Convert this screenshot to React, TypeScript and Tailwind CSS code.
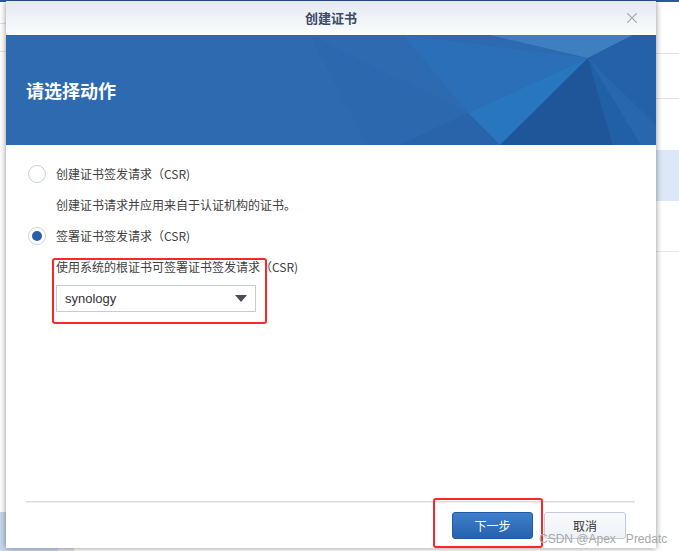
import { IoCloseOutline } from "react-icons/io5";

const cjk = { fontFamily: '"Microsoft YaHei", "Noto Sans CJK SC", "Liberation Sans", sans-serif' };

const Banner = () => {
  return (
    <div className="relative h-[110px] w-full overflow-hidden bg-[#2d6ab0]">
      {/* facets drawn on the right */}
      <svg className="absolute inset-0" width="650" height="110" viewBox="0 0 650 110">
        <polygon points="304,0 462,78 394,110 361,110" fill="#2b68ae" />
        <polygon points="397,0 582,23 462,78" fill="#2a6fb7" />
        <polygon points="484,0 582,23 627,0" fill="#3d7fbf" />
        <polygon points="582,23 627,0 650,0 650,90" fill="#2461a9" />
        <polygon points="462,78 582,23 494,110" fill="#2876be" />
        <polygon points="394,110 462,78 494,110" fill="#2963a9" />
        <polygon points="582,23 494,110 607,110" fill="#1f5599" />
        <polygon points="582,23 650,90 650,110 607,110" fill="#2160a6" />
        <polygon points="582,23 635,110 650,110 650,90" fill="#2867ae" />
      </svg>
      <h1 className="relative pl-5 pt-[42px] text-[18px] font-bold text-white" style={cjk}>
        请选择动作
      </h1>
    </div>
  );
};

const Radio = ({ checked }: { checked?: boolean }) => {
  return (
    <span className="flex h-[18px] w-[18px] shrink-0 items-center justify-center rounded-full border border-[#c9d0d9] bg-white">
      {checked && <span className="h-[10px] w-[10px] rounded-full bg-[#2a5ea8]" />}
    </span>
  );
};

export default function App() {
  return (
    <div className="relative h-[551px] w-[679px] overflow-hidden bg-white" style={cjk}>
      {/* page behind the dialog */}
      <div className="h-[2px] w-full bg-[#2a5a98]" />
      <div className="absolute right-0 top-[53px] h-px w-[30px] bg-[#dfe3e8]" />
      <div className="absolute right-0 top-[98px] h-px w-[30px] bg-[#dfe3e8]" />
      <div className="absolute right-0 top-[150px] h-[51px] w-[30px] bg-[#dce8f7]" />
      <div className="absolute right-0 top-[251px] h-px w-[30px] bg-[#e4e7eb]" />
      <div className="absolute left-0 top-[23px] h-px w-[8px] bg-[#dfe3e8]" />
      <div className="absolute left-0 top-[51px] h-px w-[8px] bg-[#dfe3e8]" />
      <div className="absolute bottom-0 left-0 h-[39px] w-[58px] bg-[#c7d7ec]" />
      <div className="absolute bottom-0 left-[58px] h-[39px] w-[16px] bg-[#e3e6ea]" />

      {/* dialog window */}
      <div className="absolute left-[6px] top-[1px] flex h-[547px] w-[650px] flex-col bg-white shadow-[0_0_6px_rgba(0,0,0,0.45)]">
        <div className="relative flex h-[34px] items-center justify-center bg-gradient-to-b from-[#e4e9f0] to-[#fbfcfd]">
          <span className="text-[13px] font-bold text-[#3a4a68]">创建证书</span>
          <IoCloseOutline className="absolute right-[14px] top-[7px] text-[#a3a8ae]" size={20} />
        </div>
        <Banner />

        <div className="flex flex-1 flex-col px-[22px] pt-[20px] text-[12px] text-[#404040]">
          <label className="flex items-center gap-[10px]">
            <Radio />
            <span>创建证书签发请求（CSR)</span>
          </label>
          <p className="mt-[13px] pl-[28px]">创建证书请求并应用来自于认证机构的证书。</p>
          <label className="mt-[13px] flex items-center gap-[10px]">
            <Radio checked />
            <span>签署证书签发请求（CSR)</span>
          </label>
          <div className="mt-[13px] pl-[28px]">
            <p>使用系统的根证书可签署证书签发请求（CSR)</p>
            <div className="mt-[9px] flex h-[27px] w-[200px] items-center justify-between border border-[#c6ccd4] bg-white pl-[8px] pr-[8px]">
              <span className="text-[13px] text-[#333]" style={{ fontFamily: '"Liberation Sans", "Noto Sans CJK SC", sans-serif' }}>
                synology
              </span>
              <svg width="12" height="7" viewBox="0 0 12 7">
                <polygon points="0,0 12,0 6,7" fill="#4a4f57" />
              </svg>
            </div>
          </div>
        </div>

        <div className="mx-[20px] mr-[21px] h-[2px] border-t border-[#dcdcdc] bg-[#eeeeee]" />
        <div className="flex justify-end gap-[11px] pb-[9px] pr-[30px] pt-[9px]">
          <button className="h-[27px] w-[81px] rounded-[3px] border border-[#1f5aa3] bg-gradient-to-b from-[#3f7fcb] to-[#2562ae] text-[12px] text-white">
            下一步
          </button>
          <button className="h-[27px] w-[82px] rounded-[3px] border border-[#c2ccd8] bg-gradient-to-b from-[#f8fafc] to-[#eef2f7] text-[12px] text-[#333]">
            取消
          </button>
        </div>
      </div>

      {/* annotation boxes */}
      <div className="absolute left-[52px] top-[258px] h-[66px] w-[215px] rounded-[3px] border-2 border-[#f5282a]" />
      <div className="absolute left-[433px] top-[498px] h-[50px] w-[110px] rounded-[3px] border-2 border-[#f5282a]" />

      {/* watermark */}
      <span
        className="absolute left-[539px] top-[530px] text-[12px] text-[#a8a8a8]"
        style={{ fontFamily: '"Liberation Sans", sans-serif' }}
      >
        CSDN @Apex&nbsp;&nbsp;&nbsp;Predatc
      </span>
    </div>
  );
}
